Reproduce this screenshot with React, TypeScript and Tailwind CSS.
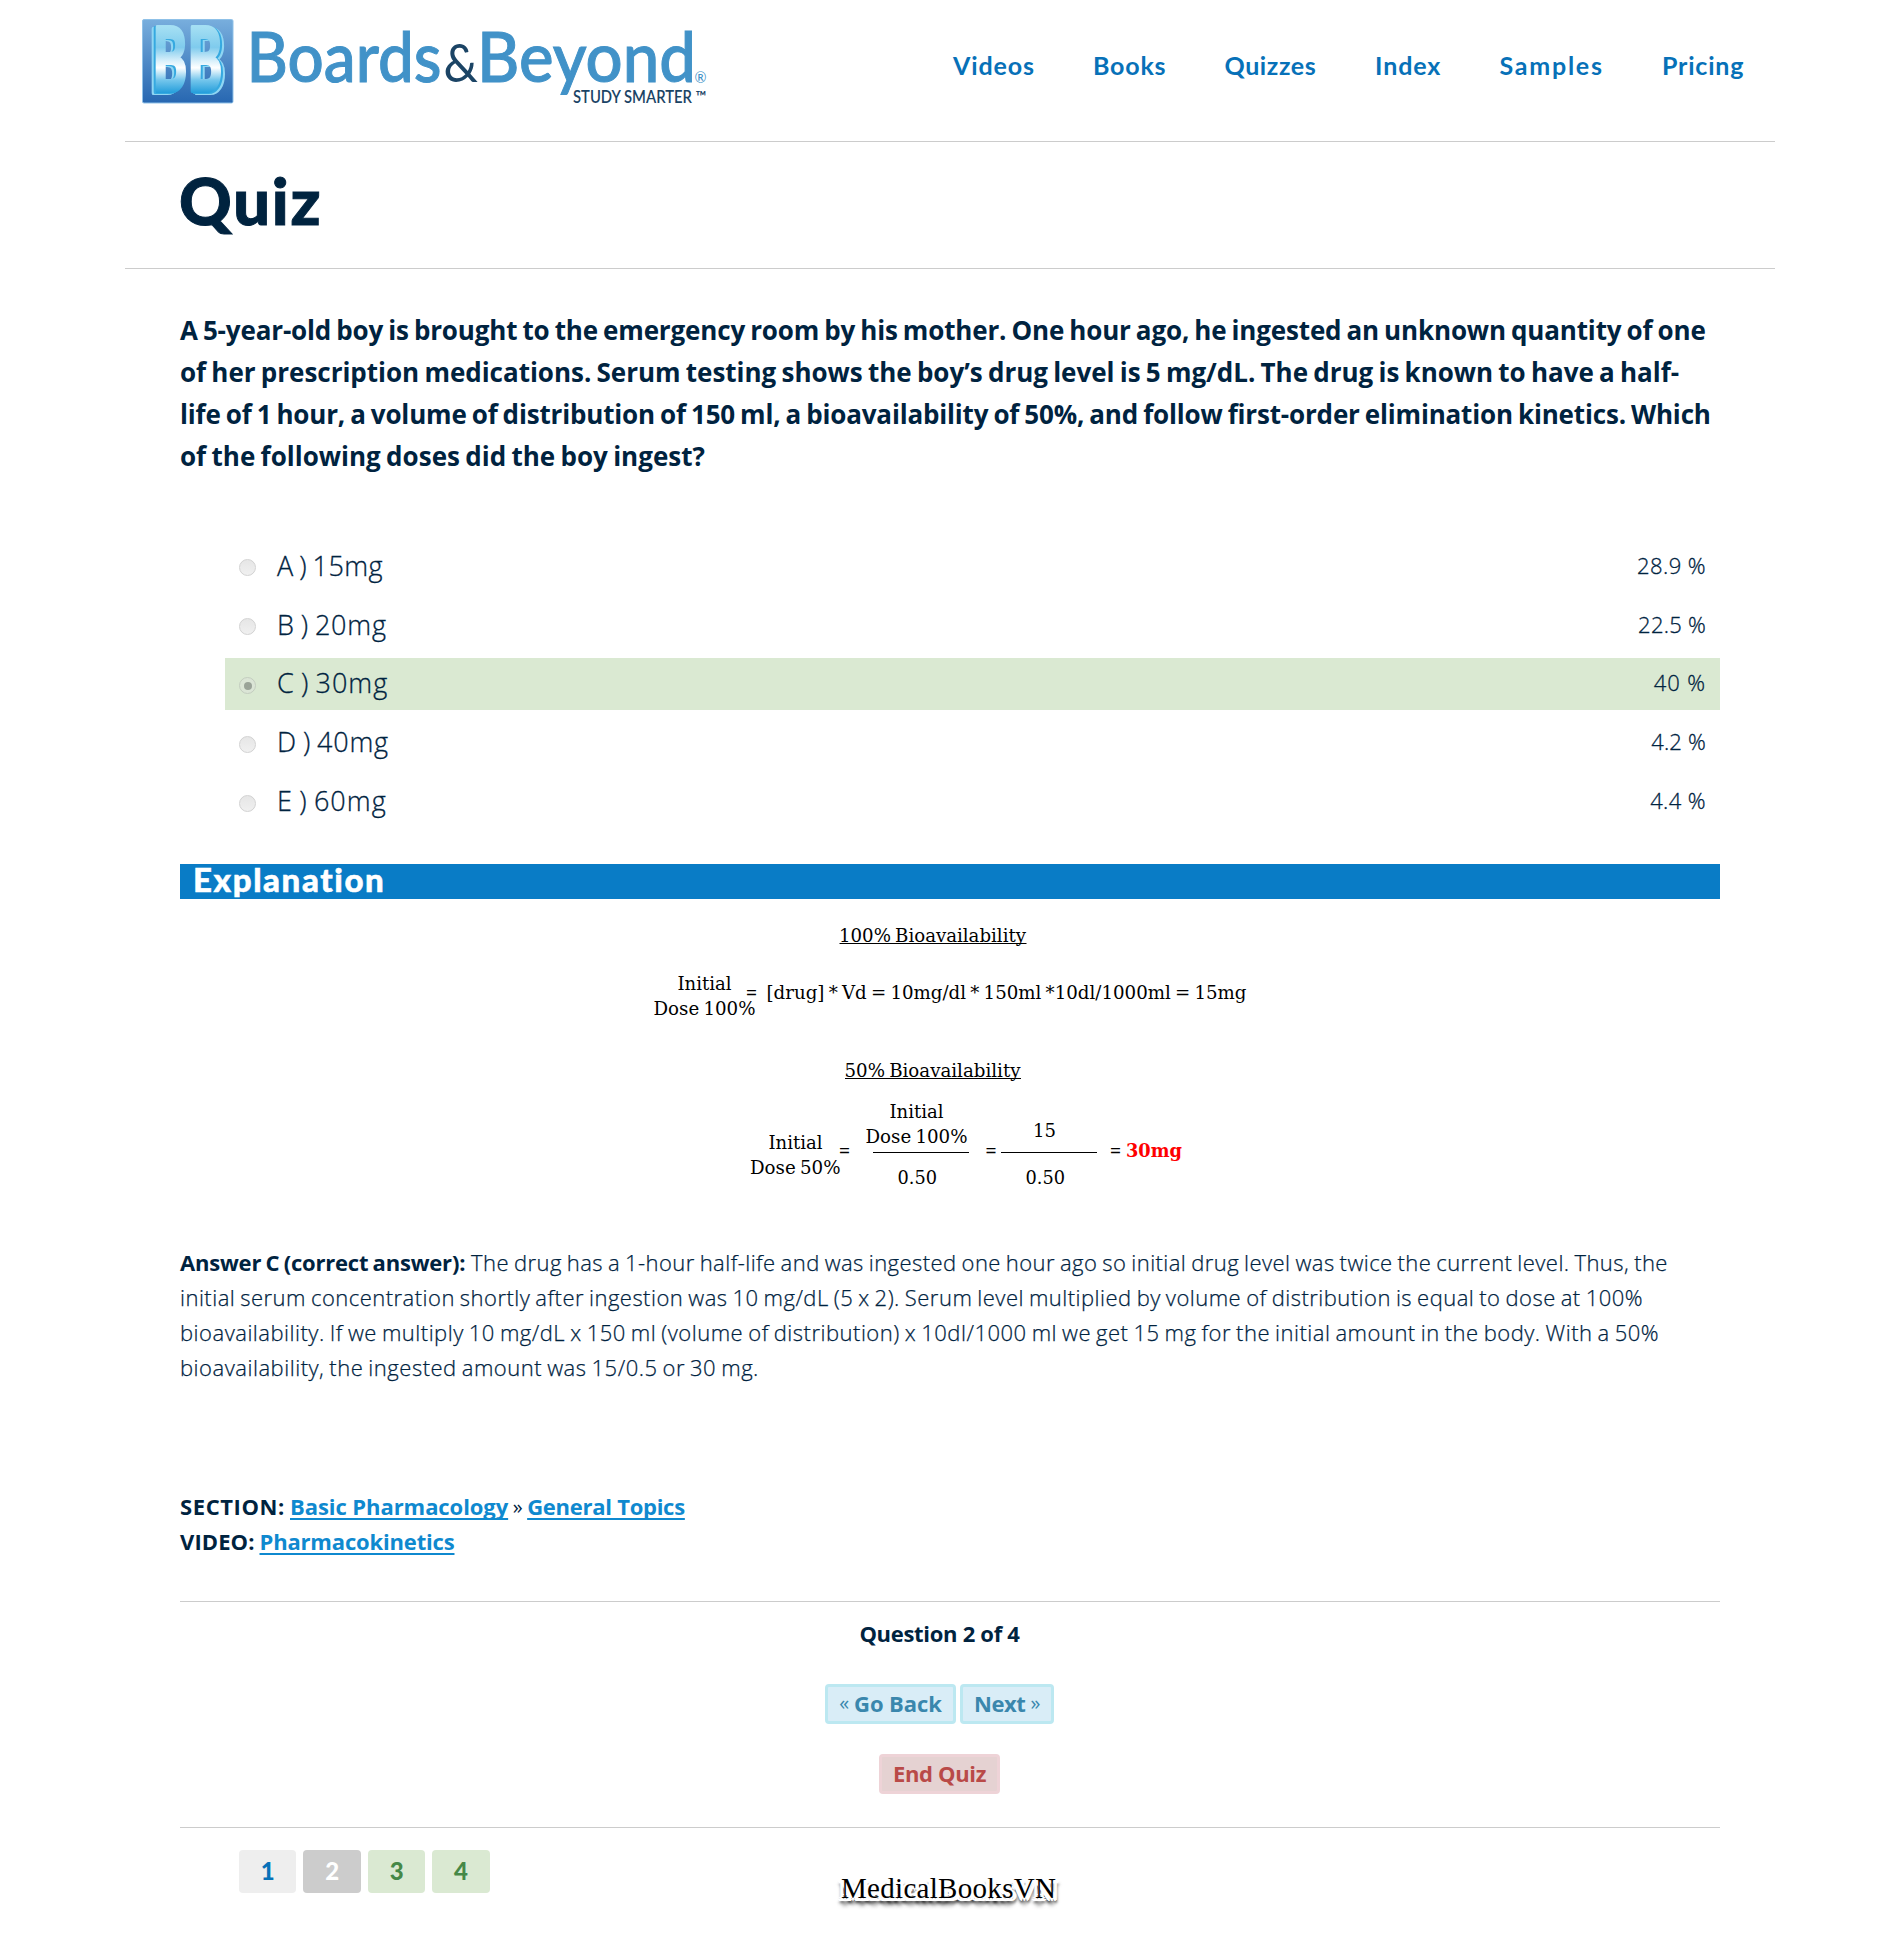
import type { ReactNode } from "react";

const NAV = [
  { label: "Videos", cls: "w-[140px] tracking-[0.9px]" },
  { label: "Books", cls: "w-[131.5px] tracking-[0.8px]" },
  { label: "Quizzes", cls: "w-[150.5px] tracking-[0.6px]" },
  { label: "Index", cls: "w-[124.5px] tracking-[0.9px]" },
  { label: "Samples", cls: "w-[162.5px] tracking-[1.75px]" },
  { label: "Pricing", cls: "w-[90px] tracking-[0.8px]" },
];

const QUESTION = [
  { text: "A 5-year-old boy is brought to the emergency room by his mother. One hour ago, he ingested an unknown quantity of one", cls: "tracking-[-0.15px]" },
  { text: "of her prescription medications. Serum testing shows the boy’s drug level is 5 mg/dL. The drug is known to have a half-", cls: "tracking-[-0.015px]" },
  { text: "life of 1 hour, a volume of distribution of 150 ml, a bioavailability of 50%, and follow first-order elimination kinetics. Which", cls: "tracking-[-0.166px]" },
  { text: "of the following doses did the boy ingest?", cls: "tracking-[0.02px]" },
];

const OPTIONS = [
  { text: "A ) 15mg", pct: "28.9 %", cls: "tracking-[0.4px]", pctCls: "-mt-[2px] tracking-[0.43px]" },
  { text: "B ) 20mg", pct: "22.5 %", cls: "tracking-[0.8px]", pctCls: "-mt-[2px] tracking-[0.25px]" },
  { text: "C ) 30mg", pct: "40 %", cls: "-mt-[2px] tracking-[1px]", pctCls: "-mt-[4px] tracking-[0.9px]", selected: true },
  { text: "D ) 40mg", pct: "4.2 %", cls: "-mt-[2px] tracking-[0.8px]", pctCls: "-mt-[4px] tracking-[0.2px]" },
  { text: "E ) 60mg", pct: "4.4 %", cls: "-mt-[2px] tracking-[1.05px]", pctCls: "-mt-[4px] tracking-[0.4px]" },
];

const PAGES = [
  { n: 1, cls: "bg-[#eeeeee] text-[#0771b8]" },
  { n: 2, cls: "bg-[#cccccc] text-white" },
  { n: 3, cls: "bg-[#dae9d2] text-[#468847]" },
  { n: 4, cls: "bg-[#dae9d2] text-[#468847]" },
];

function BadgeLetter({ transform, dx }: { transform: string; dx: number }) {
  return (
    <g transform={transform} fontFamily="Lato" fontWeight={900} fontSize={88} strokeLinejoin="round" strokeWidth={4}>
      <text x={dx} y={2} fill="#8fd6f3" stroke="#8fd6f3">
        B
      </text>
      <text x={dx * 0.5} y={1} fill="#36a9e0" stroke="#36a9e0">
        B
      </text>
      <text x={0} y={0} fill="url(#ice)" stroke="url(#ice)">
        B
      </text>
    </g>
  );
}

function Logo() {
  return (
    <svg width="580" height="110" viewBox="136 6 580 110" className="shrink-0 overflow-visible">
      <defs>
        <linearGradient id="sq" x1="0" y1="0" x2="0" y2="1">
          <stop offset="0" stopColor="#78aedd" />
          <stop offset="1" stopColor="#2767b1" />
        </linearGradient>
        <linearGradient id="ice" gradientUnits="userSpaceOnUse" x1="0" y1="-64" x2="0" y2="4">
          <stop offset="0" stopColor="#a4dff3" />
          <stop offset="0.3" stopColor="#7fcbed" />
          <stop offset="0.5" stopColor="#d9f0fb" />
          <stop offset="0.6" stopColor="#ffffff" />
          <stop offset="0.78" stopColor="#74c6ec" />
          <stop offset="1" stopColor="#1797d8" />
        </linearGradient>
      </defs>
      <rect x="142.5" y="19.5" width="90.5" height="83.5" rx="1.5" fill="url(#sq)" stroke="#8fc1e8" strokeWidth="1" />
      <BadgeLetter transform="translate(153 91) scale(0.58 1)" dx={-7} />
      <BadgeLetter transform="translate(188 91) scale(0.58 1)" dx={7} />
      <g fontFamily="Lato" fill="#4192c8" stroke="#4192c8">
        <text x="246.5" y="81.7" fontSize="69" fontWeight="500" textLength="195" lengthAdjust="spacingAndGlyphs" strokeWidth="1">
          Boards
        </text>
        <text x="477" y="81.7" fontSize="69" fontWeight="500" textLength="219" lengthAdjust="spacingAndGlyphs" strokeWidth="1">
          Beyond
        </text>
        <text x="694.5" y="83" fontSize="15" stroke="none" textLength="12" lengthAdjust="spacingAndGlyphs">
          ®
        </text>
      </g>
      <g fontFamily="Lato" fill="#1b4465">
        <text x="443.5" y="81.7" fontSize="52" textLength="34.5" lengthAdjust="spacingAndGlyphs">
          &amp;
        </text>
        <text x="573" y="103" fontSize="17" fontWeight="600" textLength="119" lengthAdjust="spacingAndGlyphs">
          STUDY SMARTER
        </text>
        <text x="695.5" y="101.5" fontSize="15" fontWeight="600" textLength="11" lengthAdjust="spacingAndGlyphs">
          ™
        </text>
      </g>
    </svg>
  );
}

function Eq({ x, y, w, children, fill = "#000", weight = 400 }: { x: number; y: number; w: number; children: string; fill?: string; weight?: number }) {
  return (
    <text x={x} y={y} textLength={w} lengthAdjust="spacingAndGlyphs" fill={fill} fontWeight={weight}>
      {children}
    </text>
  );
}

function DoseFigure() {
  return (
    <svg
      width="660"
      height="346"
      viewBox="620 899 660 346"
      className="ml-[440px] block [word-spacing:-1.5px]"
      fontFamily="'DejaVu Serif Condensed','DejaVu Serif',serif"
      fontSize="19.4"
    >
      <Eq x={839} y={942} w={187}>100% Bioavailability</Eq>
      <rect x="839.5" y="943" width="187" height="1" />
      <Eq x={677.5} y={990} w={54}>Initial</Eq>
      <Eq x={653.5} y={1014.5} w={102}>Dose 100%</Eq>
      <Eq x={745.5} y={999} w={12}>=</Eq>
      <Eq x={766.5} y={999} w={480}>[drug] * Vd = 10mg/dl * 150ml *10dl/1000ml = 15mg</Eq>
      <Eq x={844.5} y={1077} w={176}>50% Bioavailability</Eq>
      <rect x="845" y="1078" width="176" height="1" />
      <Eq x={889.5} y={1117.5} w={54}>Initial</Eq>
      <Eq x={865.5} y={1142.5} w={102}>Dose 100%</Eq>
      <rect x="873" y="1152" width="96" height="1" />
      <Eq x={897.5} y={1183.5} w={39.5}>0.50</Eq>
      <Eq x={768.5} y={1148.5} w={54}>Initial</Eq>
      <Eq x={750} y={1173.5} w={90.5}>Dose 50%</Eq>
      <Eq x={838.5} y={1156.5} w={12}>=</Eq>
      <Eq x={985} y={1157} w={12}>=</Eq>
      <Eq x={1033} y={1136.5} w={23}>15</Eq>
      <rect x="1001" y="1152" width="96" height="1" />
      <Eq x={1025.5} y={1183.5} w={39.5}>0.50</Eq>
      <Eq x={1109.5} y={1157} w={12}>=</Eq>
      <Eq x={1126} y={1157} w={56} fill="#fe0000" weight={700}>30mg</Eq>
    </svg>
  );
}

function Radio({ checked }: { checked?: boolean }) {
  return (
    <span
      className={
        checked
          ? "mt-[3px] flex size-[17px] items-center justify-center rounded-full border border-[#c3cdbf] bg-[#dbe5d6]"
          : "mt-[3px] flex size-[17px] items-center justify-center rounded-full border border-[#d2d2d2] bg-linear-to-b from-[#e6e6e6] to-[#f0f0f0]"
      }
    >
      {checked && <span className="size-[8px] rounded-full bg-[#9aa398]" />}
    </span>
  );
}

function TextLink({ cls, children }: { cls: string; children: ReactNode }) {
  return (
    <a className={`font-bold text-[#0f89cf] underline decoration-2 underline-offset-[3px] [text-decoration-skip-ink:none] ${cls}`}>{children}</a>
  );
}

export default function App() {
  return (
    <div className="min-h-[1959px] w-[1899px] overflow-hidden bg-white font-['Open_Sans',sans-serif] whitespace-nowrap text-[#00233f]">
      <div className="ml-[125px] w-[1650px]">
        <header className="flex h-[142px] border-b border-[#cccccc]">
          <div className="ml-[11px] pt-[6px]">
            <Logo />
          </div>
          <nav className="ml-[237px] flex pt-[45px] font-['Lato',sans-serif] text-[25px] leading-[40px] font-bold text-[#0771b8]">
            {NAV.map((n) => (
              <a key={n.label} className={n.cls}>
                {n.label}
              </a>
            ))}
          </nav>
        </header>

        <div className="h-[127px] border-b border-[#cccccc] pt-[26px] pl-[54px]">
          <h1 className="font-['Lato',sans-serif] text-[65px] leading-[65px] font-black tracking-[1.8px] [-webkit-text-stroke:1px_#00233f]">Quiz</h1>
        </div>
      </div>

      <main className="ml-[180px] w-[1540px] pt-10">
        <div className="text-[26px] leading-[42px] font-bold [word-spacing:-1.5px]">
          {QUESTION.map((l) => (
            <div key={l.text} className={l.cls}>
              {l.text}
            </div>
          ))}
        </div>

        <div className="mt-[63px] ml-[45px] flex flex-col gap-[7px]">
          {OPTIONS.map((o) => (
            <div
              key={o.text}
              className={`flex h-[52px] items-center pr-[14px] pl-[14px] font-light [-webkit-text-stroke:0.3px_#00233f] ${o.selected ? "bg-[#dae9d2]" : ""}`}
            >
              <Radio checked={o.selected} />
              <span className={`ml-[21px] text-[27px] leading-[50px] [word-spacing:-1.8px] ${o.cls}`}>{o.text}</span>
              <span className={`ml-auto text-[22px] leading-[50px] ${o.pctCls}`}>{o.pct}</span>
            </div>
          ))}
        </div>

        <h2 className="mt-9 h-[35px] bg-[#097cc6] pl-[13px] font-['Lato',sans-serif] text-[33px] leading-[31px] font-black tracking-[1.6px] text-white [-webkit-text-stroke:0.5px_#fff]">
          Explanation
        </h2>

        <DoseFigure />

        <div className="text-[22px] leading-[35px] font-light [word-spacing:-1.2px]">
          <div className="flex">
            <span className="w-[291px] font-bold tracking-[-0.2px]">Answer C (correct answer):</span>
            <span className="tracking-[0.446px] [-webkit-text-stroke:0.25px_#00233f]">
              The drug has a 1-hour half-life and was ingested one hour ago so initial drug level was twice the current level. Thus, the
            </span>
          </div>
          <div className="[-webkit-text-stroke:0.25px_#00233f]">
            <div className="tracking-[0.48px]">
              initial serum concentration shortly after ingestion was 10 mg/dL (5 x 2). Serum level multiplied by volume of distribution is equal to dose at 100%
            </div>
            <div className="tracking-[0.5px]">
              bioavailability. If we multiply 10 mg/dL x 150 ml (volume of distribution) x 10dl/1000 ml we get 15 mg for the initial amount in the body. With a 50%
            </div>
            <div className="tracking-[0.51px]">bioavailability, the ingested amount was 15/0.5 or 30 mg.</div>
          </div>
        </div>

        <div className="mt-[104px] text-[22px] leading-[35px]">
          <div className="flex">
            <span className="w-[110px] font-bold tracking-[0.6px]">SECTION:</span>
            <TextLink cls="tracking-[-0.07px]">Basic Pharmacology</TextLink>
            <span className="w-[19px] text-center text-[20px]">»</span>
            <TextLink cls="tracking-[-0.26px]">General Topics</TextLink>
          </div>
          <div className="flex">
            <span className="w-[79.5px] font-bold tracking-[0.1px]">VIDEO:</span>
            <TextLink cls="tracking-[-0.17px]">Pharmacokinetics</TextLink>
          </div>
        </div>

        <div className="mt-[42px] flex h-[227px] flex-col items-center border-y border-[#cccccc] pt-[14px] pr-[21px] text-[22px] leading-[35px] font-bold">
          <div className="tracking-[-0.3px]">Question 2 of 4</div>
          <div className="mt-[33px] flex gap-1 leading-[32px] text-[#3a87ad]">
            <button className="flex h-10 w-[131px] justify-center gap-[5px] rounded border-3 border-[#bce8f1] bg-[#d9edf7] tracking-[-0.1px]">
              <span className="text-[20px] font-normal">«</span>Go Back
            </button>
            <button className="flex h-10 w-[94px] justify-center gap-[5px] rounded border-3 border-[#bce8f1] bg-[#d9edf7] tracking-[-0.4px]">
              Next<span className="text-[20px] font-normal">»</span>
            </button>
          </div>
          <button className="mt-[30px] flex h-10 w-[121px] justify-center rounded border-3 border-[#eed3d7] bg-[#e5d2d2] leading-[32px] tracking-[-0.35px] text-[#b94a48]">
            End Quiz
          </button>
        </div>

        <div className="relative mt-[22px] flex gap-[7px] pl-[59px]">
          {PAGES.map((p) => (
            <a key={p.n} className={`h-[43px] w-[57.45px] rounded-[4px] text-center font-['Lato',sans-serif] text-[24px] leading-[41px] font-black ${p.cls}`}>
              {p.n}
            </a>
          ))}
          <div className="absolute top-[18px] left-[661px] font-['Liberation_Serif',serif] text-[29px] leading-[40px] tracking-[0.3px] text-black [text-shadow:3px_0_0_#fff,-3px_0_0_#fff,0_3px_0_#fff,0_-3px_0_#fff,3px_3px_0_#fff,-3px_3px_0_#fff,4px_2px_0_#fff,-4px_2px_0_#fff,4px_5px_3px_rgba(0,0,0,0.7),-3px_5px_3px_rgba(0,0,0,0.7),0_7px_4px_rgba(0,0,0,0.7)]">
            MedicalBooksVN
          </div>
        </div>
      </main>
    </div>
  );
}
